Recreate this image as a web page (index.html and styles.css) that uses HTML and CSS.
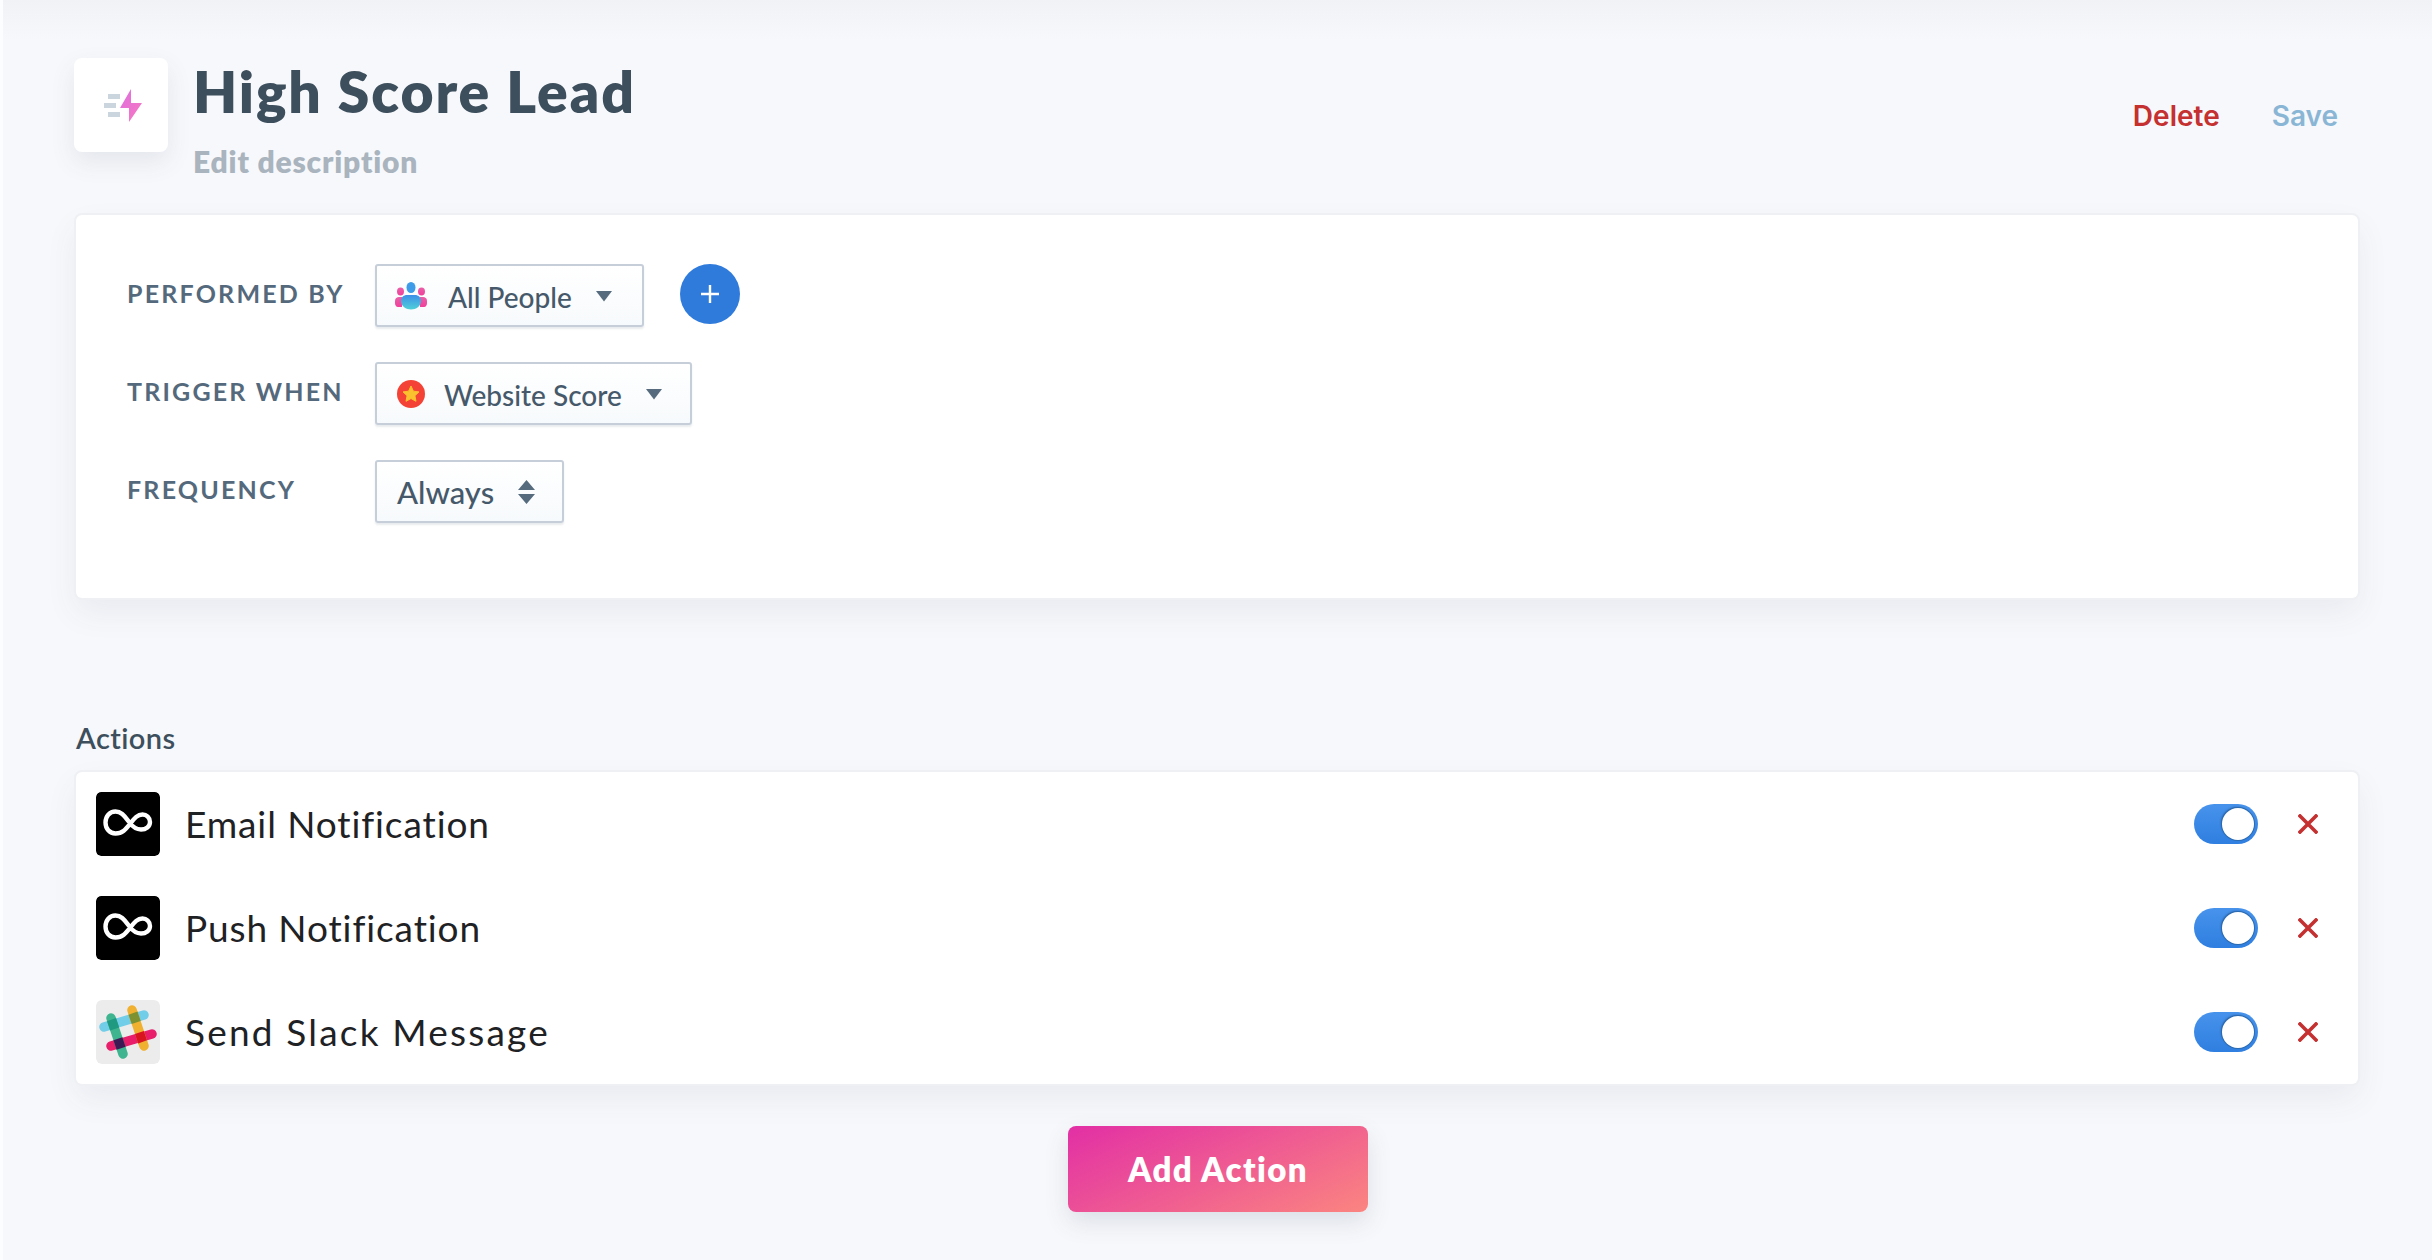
FILE: index.html
```html
<!DOCTYPE html>
<html lang="en">
<head>
  <meta charset="UTF-8">
  <title>High Score Lead</title>
  <link rel="stylesheet" href="styles.css">
</head>
<body>
  <svg class="defs" width="0" height="0" aria-hidden="true">
    <defs>
      <linearGradient id="boltGrad" x1="0" y1="0" x2="1" y2="1">
        <stop offset="0" stop-color="#dd6fe0"/>
        <stop offset="1" stop-color="#f978c0"/>
      </linearGradient>
      <linearGradient id="pinkGrad" x1="0" y1="0" x2="0" y2="1">
        <stop offset="0" stop-color="#e95fa8"/>
        <stop offset="1" stop-color="#f0409a"/>
      </linearGradient>
      <linearGradient id="blueGrad" x1="0" y1="0" x2="0" y2="1">
        <stop offset="0" stop-color="#3d8fe8"/>
        <stop offset="1" stop-color="#4fd0d8"/>
      </linearGradient>
      <symbol id="loop" viewBox="0 0 64 64">
        <rect width="64" height="64" rx="5" fill="#000"/>
        <path class="soft" d="M9.500 30.500C9.500 24.500 13.500 19.500 19.500 19.500C26 19.500 29 25 33 30C36 34 39 37.500 45 37.500C50 37.500 54 34.500 54 30C54 25.500 50.500 22.500 46.500 22.500C41 22.500 38 27 34 32C30 37 26.500 41.500 19.500 41.500C13.500 41.500 9.500 36.500 9.500 30.500Z" fill="none" stroke="#fff" stroke-width="4.400"/>
      </symbol>
      <symbol id="cross" viewBox="0 0 20 20">
        <path d="M2 2L18 18M18 2L2 18" stroke="#c53030" stroke-width="3.600" stroke-linecap="square"/>
      </symbol>
      <symbol id="caret" viewBox="0 0 16 11">
        <path d="M0 0H16L8 10.500Z" fill="#566b7e"/>
      </symbol>
    </defs>
  </svg>

  <div class="page">
    <header class="head">
      <div class="head-left">
        <div class="head-icon">
          <svg class="bolt" width="40" height="34" viewBox="0 0 40 34">
            <rect x="4" y="5" width="12" height="5" fill="#cbd5dd"/>
            <rect y="14" width="12" height="5" fill="#cbd5dd"/>
            <rect x="4" y="23" width="12" height="5" fill="#cbd5dd"/>
            <path d="M27 0V14H38L25 33V19H16Z" fill="url(#boltGrad)"/>
          </svg>
        </div>
        <div>
          <h1 class="title">High Score Lead</h1>
          <div class="desc">Edit description</div>
        </div>
      </div>
      <div class="head-links">
        <a class="link-delete">Delete</a>
        <a class="link-save">Save</a>
      </div>
    </header>

    <section class="card trigger">
      <div class="field">
        <div class="field-label">PERFORMED BY</div>
        <div class="select select-people">
          <svg width="32" height="28" viewBox="0 0 32 28">
            <ellipse cx="5.500" cy="9.500" rx="3.500" ry="4" fill="url(#pinkGrad)"/>
            <ellipse cx="26.500" cy="9.500" rx="3.500" ry="4" fill="url(#pinkGrad)"/>
            <path d="M0 19C0 16 2 15 4 15H7V25H3C1 25 0 23 0 21Z" fill="url(#pinkGrad)"/>
            <path d="M32 19C32 16 30 15 28 15H25V25H29C31 25 32 23 32 21Z" fill="url(#pinkGrad)"/>
            <ellipse cx="16" cy="5.500" rx="4.500" ry="5.500" fill="#3d9be8"/>
            <path d="M6 19C6 15 9 13 12 13H20C23 13 26 15 26 19C26 24 21 27.500 16 27.500C11 27.500 6 24 6 19Z" fill="url(#blueGrad)"/>
          </svg>
          <span class="select-text">All People</span>
          <svg class="caret" width="16" height="11"><use href="#caret"/></svg>
        </div>
        <button class="add-btn" type="button">
          <svg width="20" height="20" viewBox="0 0 20 20"><path d="M10 1V19M1 10H19" stroke="#fff" stroke-width="2.400"/></svg>
        </button>
      </div>
      <div class="field">
        <div class="field-label">TRIGGER WHEN</div>
        <div class="select select-score">
          <svg width="28" height="28" viewBox="0 0 28 28">
            <circle cx="14" cy="14" r="14" fill="#f44336"/>
            <path d="M14 6L16.400 11.200L22 11.900L17.900 15.700L19 21.300L14 18.500L9 21.300L10.100 15.700L6 11.900L11.600 11.200Z" fill="#fbc02d" stroke="#fbc02d" stroke-linejoin="round"/>
          </svg>
          <span class="select-text">Website Score</span>
          <svg class="caret" width="16" height="11"><use href="#caret"/></svg>
        </div>
      </div>
      <div class="field">
        <div class="field-label">FREQUENCY</div>
        <div class="select select-freq">
          <span class="select-text">Always</span>
          <svg class="updown" width="17" height="24" viewBox="0 0 17 24">
            <path d="M8.500 0L17 10H0ZM0 14H17L8.500 24Z" fill="#566b7e"/>
          </svg>
        </div>
      </div>
    </section>

    <h2 class="actions-title">Actions</h2>
    <section class="card actions">
      <div class="action">
        <svg class="action-icon" width="64" height="64"><use href="#loop"/></svg>
        <span class="action-name">Email Notification</span>
        <span class="toggle"><span class="knob"></span></span>
        <svg class="remove" width="20" height="20"><use href="#cross"/></svg>
      </div>
      <div class="action">
        <svg class="action-icon" width="64" height="64"><use href="#loop"/></svg>
        <span class="action-name">Push Notification</span>
        <span class="toggle"><span class="knob"></span></span>
        <svg class="remove" width="20" height="20"><use href="#cross"/></svg>
      </div>
      <div class="action">
        <svg class="action-icon" width="64" height="64" viewBox="0 0 64 64">
          <rect width="64" height="64" rx="6" fill="#ececec"/>
          <g class="soft" stroke-width="9.500" fill="none">
            <path d="M8 27L48 15" stroke="#72cde8" stroke-linecap="round"/>
            <path d="M15 46L56 34" stroke="#e91e6b" stroke-linecap="round"/>
            <path d="M15 18L27 54" stroke="#3fb58f" stroke-linecap="round"/>
            <path d="M36 10L48 46" stroke="#f0b030" stroke-linecap="round"/>
            <path d="M15.500 19.600L18.700 29" stroke="#1f9a80"/>
            <path d="M37 13.100L40.200 22.500" stroke="#7d9130"/>
            <path d="M21.900 38.800L25.100 48.200" stroke="#3e1a55"/>
            <path d="M43.400 32.500L46.600 41.900" stroke="#d8141f"/>
          </g>
        </svg>
        <span class="action-name action-name-wide">Send Slack Message</span>
        <span class="toggle"><span class="knob"></span></span>
        <svg class="remove" width="20" height="20"><use href="#cross"/></svg>
      </div>
    </section>

    <div class="add-row">
      <button class="add-action" type="button">Add Action</button>
    </div>
  </div>
</body>
</html>
```

FILE: styles.css
```css
html, body {
  margin: 0;
  height: 100%;
}

body {
  background-color: #f7f8fb;
  font-family: "Lato", "Liberation Sans", sans-serif;
  overflow: hidden;
}

.defs {
  position: absolute;
}

.soft {
  filter: blur(0.6px);
}

.page {
  box-sizing: border-box;
  height: 1260px;
  padding: 58px 74px 0 76px;
  background: linear-gradient(#f0f2f5 0, #f7f8fb 40px);
  box-shadow: inset 3px 0 0 #fcfdfe;
}

/* header */
.head {
  display: flex;
  justify-content: space-between;
  height: 157px;
}

.head-left {
  display: flex;
  gap: 25px;
  margin-left: -2px;
}

.head-icon {
  width: 94px;
  height: 94px;
  display: flex;
  align-items: center;
  justify-content: center;
  background-color: white;
  border-radius: 8px;
  box-shadow: 0 10px 24px rgba(60, 80, 110, 0.1);
}

.bolt {
  margin: 2px 0 0 5px;
}

.title {
  margin: 0;
  font-size: 57px;
  line-height: 66px;
  font-weight: 800;
  letter-spacing: 1.9px;
  color: #3d4f5c;
}

.desc {
  margin-top: 19px;
  font-size: 30px;
  line-height: 36px;
  font-weight: 800;
  letter-spacing: 0.8px;
  color: #a9b4be;
}

.head-links {
  display: flex;
  gap: 52px;
  padding: 42px 20px 0 0;
  font-family: "Inter", sans-serif;
  font-size: 28px;
  line-height: 32px;
  font-weight: 600;
}

.link-delete {
  color: #c53030;
}

.link-save {
  color: #8ab6d6;
}

/* cards */
.card {
  background-color: white;
  border-radius: 6px;
  box-shadow: 0 0 0 2px #eef0f4, 0 14px 32px rgba(60, 80, 110, 0.08);
}

.trigger {
  height: 383px;
  box-sizing: border-box;
  padding: 49px 0 0 51px;
}

.field {
  display: flex;
  align-items: flex-start;
  height: 63px;
  margin-bottom: 35px;
}

.field-label {
  width: 248px;
  font-size: 25px;
  line-height: 58px;
  font-weight: 700;
  letter-spacing: 2.2px;
  color: #55697c;
}

.select {
  box-sizing: border-box;
  height: 63px;
  display: flex;
  align-items: center;
  border: 2px solid #c5ced9;
  border-radius: 3px;
  background: linear-gradient(white, #f7fafc);
  box-shadow: 0 2px 2px rgba(90, 110, 130, 0.14);
}

.select-text {
  padding-top: 2px;
  font-size: 28px;
  font-weight: 500;
  color: #46596a;
}

.select-people {
  width: 269px;
  padding-left: 18px;
}

.select-people .select-text {
  margin-left: 21px;
}

.select-score {
  width: 317px;
  padding-left: 20px;
}

.select-score .select-text {
  margin-left: 19px;
}

.select-freq {
  width: 189px;
  padding-left: 20px;
}

.select-freq .select-text {
  font-size: 31px;
  padding-top: 0;
}

.caret {
  margin: 2px 0 0 24px;
}

.updown {
  margin-left: 24px;
}

.add-btn {
  width: 60px;
  height: 60px;
  margin-left: 36px;
  padding: 0;
  border: none;
  border-radius: 50%;
  display: flex;
  align-items: center;
  justify-content: center;
  background-color: #2f7bdc;
}

/* actions */
.actions-title {
  margin: 122px 0 0;
  font-size: 29px;
  line-height: 36px;
  font-weight: 600;
  letter-spacing: 0.4px;
  color: #3d4f5c;
}

.actions {
  margin-top: 16px;
  height: 312px;
  box-sizing: border-box;
  padding: 0 40px 0 20px;
}

.action {
  height: 104px;
  display: flex;
  align-items: center;
}

.action-icon {
  flex: none;
  border-radius: 5px;
}

.action-name {
  flex: 1;
  margin: 0 0 2px 25px;
  font-size: 37px;
  letter-spacing: 0.9px;
  color: #1f2225;
}

.action-name-wide {
  letter-spacing: 2.2px;
}

.toggle {
  box-sizing: border-box;
  width: 64px;
  height: 40px;
  padding: 4px;
  display: flex;
  justify-content: flex-end;
  border-radius: 20px;
  background: linear-gradient(#4793ec, #2f7fe0);
}

.knob {
  width: 32px;
  height: 32px;
  border-radius: 50%;
  background-color: white;
  box-shadow: 0 0 0 1px #2c6bb0, -1px -1px 2px rgba(20, 60, 110, 0.5);
}

.remove {
  margin-left: 40px;
}

/* add button */
.add-row {
  display: flex;
  justify-content: center;
  margin: 42px 0 0 2px;
}

.add-action {
  width: 300px;
  height: 86px;
  border: none;
  border-radius: 8px;
  background: linear-gradient(155deg, #e22fa5, #fb8580);
  box-shadow: 0 10px 24px rgba(60, 80, 110, 0.14);
  color: white;
  font-family: "Lato", sans-serif;
  font-size: 33px;
  font-weight: 800;
  letter-spacing: 1.4px;
}
```
